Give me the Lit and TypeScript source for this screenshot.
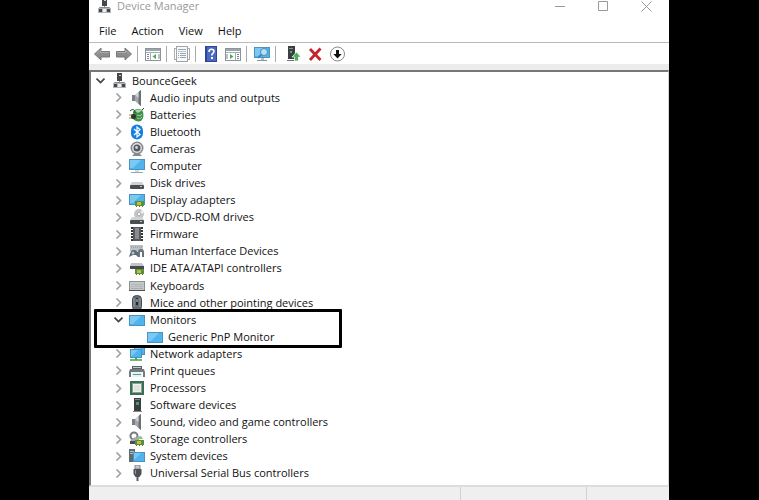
import { LitElement, html, svg, css, nothing } from "lit";
import { customElement, property } from "lit/decorators.js";
import { classMap } from "lit/directives/class-map.js";

const screen = (x: number, y: number, w: number, h: number) => svg`
  <rect x=${x} y=${y} width=${w} height=${h} fill="#4c93bb"/>
  <rect x=${x + 1} y=${y + 1} width=${w - 2} height=${h - 2} fill="#4fb4ee"/>
  <path d="M${x + 1} ${y + 1}h${w - 5}l-${h - 3} ${h - 3}h-${w - 2 - h}z" fill="#7ac8f5"/>`;

const chip = svg`
  <rect x="6" y="9" width="9" height="5" fill="#4d9445"/>
  <rect x="8" y="10" width="4" height="3" fill="#d8b430"/>
  <path d="M7 14.5h1M10 14.5h1M13 14.5h1" stroke="#8a6a10" stroke-width="1"/>`;

const drive = (y: number) => svg`
  <path d="M3 ${y}h10l2 3H1z" fill="#cfd1d3"/>
  <rect x="1" y=${y + 3} width="14" height="4" rx="1" fill="#4b4d50"/>
  <rect x="11" y=${y + 4} width="2" height="1" fill="#9fe0a6"/>`;

const speaker = svg`
  <path d="M3 5h3v6H3z" fill="#7b8086"/>
  <path d="M6 5l6-5v16l-6-5z" fill="#a4a9ae"/>
  <path d="M9.500 2l2.500-2v16l-2.500-2z" fill="#6b7075"/>
  <path d="M6 5l3.500-3v6z" fill="#d3d6d9"/>`;

const icons: Record<string, unknown> = {
  root: svg`
    <rect x="6" y="0" width="5" height="8" fill="#44484d"/><rect x="8" y="2" width="2" height="1" fill="#c8cdd2"/>
    <path d="M8.500 8v2M3.500 11V9.500h10V11" stroke="#888" fill="none"/>
    <rect x="2" y="10" width="13" height="5" fill="#b1b5b8"/>
    <rect x="3" y="11" width="3" height="3" fill="#44484c"/><rect x="11" y="11" width="3" height="3" fill="#44484c"/>
    <rect x="7" y="11" width="3" height="3" fill="#eceeef"/>`,
  audio: speaker,
  battery: svg`
    <path d="M4 5c1-3 6-4 9-2 2 3 2 8-1 11-3 1-6 0-8-2z" fill="#3f8f49"/>
    <path d="M6 4c2-2 5-2 7-.5L9 6z" fill="#a6d8a4"/>
    <path d="M8 8c2 1 4 1 5-1M8 11c2 1 3 1 5-1" stroke="#a2d79e" fill="none"/>
    <path d="M1 4c3-3 5-1 5 2M13 3l2-2" stroke="#2f4432" fill="none"/>
    <path d="M0 8h3M0 11h3" stroke="#a88a24"/><rect x="2" y="7" width="5" height="5" rx="2" fill="#2b3a2c"/>`,
  bluetooth: svg`
    <rect x="2" y="0.500" width="12" height="15" rx="6" fill="#1380e2"/>
    <path d="M5 5l6 5.500L8 13V3l3 2.500L5 11" stroke="#fff" stroke-width="1.200" fill="none"/>`,
  camera: svg`
    <circle cx="8" cy="7" r="6.500" fill="#85898d"/><circle cx="8" cy="7" r="4.900" fill="#dfe1e3"/>
    <circle cx="8" cy="7" r="3.500" fill="#54585d"/><circle cx="7.500" cy="6.500" r="1.400" fill="#d3dae0"/>
    <path d="M3 15l2-2h6l2 2z" fill="#85898d"/>`,
  computer: svg`${screen(0, 1, 16, 11)}<path d="M6 12h4v2H6z" fill="#d4dadf"/><path d="M2 14.500h12" stroke="#9aa3ab"/>`,
  disk: drive(7),
  display: svg`${screen(0, 2, 16, 11)}${chip}`,
  dvd: svg`<circle cx="10" cy="5" r="5" fill="#c3c5c7"/><path d="M10 5l3-4 2 3z" fill="#eee"/>
    <circle cx="10" cy="5" r="1.700" fill="#fff" stroke="#999" stroke-width=".7"/>${drive(8)}`,
  firmware: svg`
    <rect x="4" y="1" width="8" height="14" fill="#55585c"/><rect x="6" y="2" width="4" height="11" fill="#8a8c8f"/>
    <path d="M3 1v14M13 1v14" stroke="#333537" stroke-width="2" stroke-dasharray="2 1"/>`,
  hid: svg`
    <rect x="1" y="2" width="13" height="6" fill="#bcc1c5"/><path d="M2 4h11" stroke="#8b9196" stroke-dasharray="1 1"/>
    <path d="M0 14l2-6 2-1h2l3 2v5l-2-2H4z" fill="#5c6a74"/>
    <path d="M9 9a3 3 0 0 1 6 0v5h-2V9h-2v5H9z" fill="#68747d"/>
    <path d="M2.500 10h3M4 8.500v3" stroke="#d9dde0"/>`,
  ide: svg`<path d="M2 3h11l2 3H1z" fill="#c3c5c7"/><rect x="1" y="6" width="14" height="3" fill="#484b4f"/>${chip}`,
  keyboard: svg`
    <rect x="0.500" y="3.500" width="15" height="9" fill="#c6c9cc" stroke="#8d9195"/>
    <path d="M2 6.500h12M2 8.500h12" stroke="#b3b6b9"/><path d="M2 10.500h12" stroke="#a9acb0"/>
    <path d="M0 12.500h16" stroke="#4d5155"/>`,
  mouse: svg`
    <rect x="3.500" y="0.500" width="9" height="15" rx="4" fill="#666e76" stroke="#454b51"/>
    <path d="M5 3v9M11 3v9" stroke="#98a0a8"/><rect x="7" y="3" width="2" height="7" fill="#24282c"/><path d="M8 4v3" stroke="#d5dade"/>`,
  monitor: screen(0, 3, 16, 11),
  network: svg`${screen(5, 1, 11, 8)}${screen(1, 3, 12, 9)}
    <path d="M1 14h12" stroke="#6fb77a" stroke-width="2"/><path d="M7 12v2" stroke="#49a757" stroke-width="2"/>`,
  printer: svg`
    <path d="M3 3h10v3H3z" fill="#5b5f63"/><path d="M1 6h14l1 3v5h-2V9H2v5H0V9z" fill="#74797d"/>
    <rect x="3" y="9" width="10" height="5" fill="#e9f3f3"/><path d="M4 11.500h8" stroke="#48a0a0"/>
    <path d="M4 4.500h8" stroke="#bcd"/>`,
  cpu: svg`
    <rect x="1" y="1" width="14" height="14" fill="#3a6f51"/><rect x="3" y="3" width="10" height="10" fill="#7fa68f"/>
    <rect x="4" y="4" width="8" height="8" fill="#f0f1ef"/><rect x="5" y="5" width="6" height="6" fill="#e0e2df"/>`,
  software: svg`
    <rect x="5" y="1" width="7" height="13" fill="#3a3e41"/><rect x="6" y="2" width="5" height="1" fill="#7d8488"/>
    <rect x="7" y="5" width="3" height="3" fill="#4a9e62"/><path d="M4 14.500h9" stroke="#888"/>`,
  storage: svg`
    <circle cx="5" cy="5" r="3.500" fill="none" stroke="#777b80" stroke-width="2"/><path d="M1 10l5-4 4 2v4H1z" fill="#a5a9ac"/>
    <path d="M1 10h6v3H1z" fill="#4a4e52"/><path d="M8 6l4-1 2 3H8z" fill="#8fbf8c"/>${chip}`,
  system: svg`
    <rect x="0" y="1" width="6" height="13" fill="#5f6c76"/><path d="M1 3.500h4M1 5.500h4" stroke="#b4c1ca"/>${screen(4, 4, 12, 10)}`,
  usb: svg`
    <rect x="6" y="0" width="5" height="4" fill="#c5c8cb" stroke="#73777b" stroke-width=".8"/>
    <path d="M4.500 4h8v5l-2 3h-4l-2-3z" fill="#4d5155"/><path d="M8.500 12v4" stroke="#5b5f63" stroke-width="2"/>
    <path d="M6.500 5v4" stroke="#92979b"/>`,
  back: svg`<path d="M0.500 8L7 2v3.500h8.500v5.500H7v3z" fill="#8d8d8d" stroke="#777"/><path d="M2.500 8l4-3.500v2H15" stroke="#ababab" fill="none"/>`,
  forward: svg`<path d="M15.500 8L9 2v3.500H.5V11H9v3z" fill="#8d8d8d" stroke="#777"/><path d="M1 6.500h8.500v-2l4 3.500" stroke="#ababab" fill="none"/>`,
  tree: svg`
    <rect x="0.500" y="2.500" width="15" height="12" fill="#fff" stroke="#8c949b"/><path d="M1 4h14" stroke="#9aa5ae" stroke-width="2"/>
    <path d="M1 6.500h14M5.500 6v8" stroke="#a4adb4"/><path d="M11 8v5l-3.500-2.500z" fill="#4faa4f"/>
    <path d="M14 8v5M2 8.500h2M2 10.500h2M2 12.500h2" stroke="#7c868e"/>`,
  properties: svg`
    <rect x="0.500" y="2.500" width="15" height="11" fill="#fff" stroke="#a9adb1"/><rect x="2.500" y="0.500" width="11" height="15" fill="#f7f8f9" stroke="#a0a5aa"/>
    <path d="M4 3.500h8M4 7.500h1M6 7.500h6M4 9.500h1M6 9.500h6M4 11.500h1M6 11.500h6" stroke="#98a4b0"/><path d="M4 5.500h8" stroke="#b9c4cf"/>`,
  help: svg`
    <rect x="2" y="0" width="12" height="16" fill="#2c4796"/><rect x="4" y="1" width="9" height="14" fill="#4a69c0"/>
    <path d="M6 6c0-3.500 5-3.500 5-.7 0 2-2.300 2-2.300 4.200" stroke="#fff" stroke-width="1.600" fill="none"/><rect x="8" y="11" width="2" height="2" fill="#fff"/>`,
  action: svg`
    <rect x="0.500" y="2.500" width="15" height="12" fill="#fff" stroke="#8c949b"/><path d="M1 4h14" stroke="#9aa5ae" stroke-width="2"/>
    <path d="M1 6.500h14M10.500 6v8" stroke="#a4adb4"/><path d="M5 8v5l3.500-2.500z" fill="#4faa4f"/>
    <path d="M12 8.500h2M12 10.500h2M12 12.500h2M2 8v5" stroke="#7c868e"/>`,
  scan: svg`${screen(0, 1, 16, 11)}<circle cx="10" cy="6" r="3.500" fill="#b6e2f8" stroke="#4d8cb0"/>
    <path d="M7.500 8.500L4 12" stroke="#3d7fa6" stroke-width="1.500"/><path d="M7 12h3v2H7z" fill="#b7bfc5"/><path d="M3 14.500h10" stroke="#8a949c"/>`,
  update: svg`
    <rect x="3" y="0" width="7" height="13" fill="#3b3f42"/><path d="M4 2.500h4" stroke="#8b9196"/><rect x="5" y="5" width="2" height="2" fill="#42b75c"/>
    <path d="M2 14.500h8" stroke="#73777b"/><path d="M11.500 6l4.500 5h-2.500v4h-4v-4H7z" fill="#4fae57" stroke="#fff" stroke-width=".7"/>`,
  remove: svg`<path d="M3 3l10.500 11M13.500 2.500L3 14" stroke="#c4262b" stroke-width="2.800"/>`,
  disable: svg`
    <circle cx="8.500" cy="8" r="7" fill="#fff" stroke="#888"/><path d="M8.500 4v5" stroke="#111" stroke-width="3"/><path d="M4.300 8h8.400l-4.200 4.500z" fill="#111"/>`,
};

@customElement("dm-icon")
export class DmIcon extends LitElement {
  static styles = css`
    :host { display: block; flex: none; width: 16px; height: 16px; }
    .art { display: block; width: 100%; height: 100%; }
  `;
  @property() name = "root";
  render() {
    return html`<svg class="art" viewBox="0 0 16 16" aria-hidden="true">${icons[this.name]}</svg>`;
  }
}

interface Device { label: string; icon: string; children?: Device[]; }

const devices: Device[] = [
  { label: "Audio inputs and outputs", icon: "audio" },
  { label: "Batteries", icon: "battery" },
  { label: "Bluetooth", icon: "bluetooth" },
  { label: "Cameras", icon: "camera" },
  { label: "Computer", icon: "computer" },
  { label: "Disk drives", icon: "disk" },
  { label: "Display adapters", icon: "display" },
  { label: "DVD/CD-ROM drives", icon: "dvd" },
  { label: "Firmware", icon: "firmware" },
  { label: "Human Interface Devices", icon: "hid" },
  { label: "IDE ATA/ATAPI controllers", icon: "ide" },
  { label: "Keyboards", icon: "keyboard" },
  { label: "Mice and other pointing devices", icon: "mouse" },
  { label: "Monitors", icon: "monitor", children: [{ label: "Generic PnP Monitor", icon: "monitor" }] },
  { label: "Network adapters", icon: "network" },
  { label: "Print queues", icon: "printer" },
  { label: "Processors", icon: "cpu" },
  { label: "Software devices", icon: "software" },
  { label: "Sound, video and game controllers", icon: "audio" },
  { label: "Storage controllers", icon: "storage" },
  { label: "System devices", icon: "system" },
  { label: "Universal Serial Bus controllers", icon: "usb" },
];

const tools: [string, string][][] = [
  [["back", "Back"], ["forward", "Forward"]],
  [["tree", "Show/hide console tree"]],
  [["properties", "Properties"]],
  [["help", "Help"], ["action", "Show/hide action pane"]],
  [["scan", "Scan for hardware changes"]],
  [["update", "Update driver"], ["remove", "Uninstall device"], ["disable", "Disable device"]],
];

@customElement("app-root")
export class AppRoot extends LitElement {
  static styles = css`
    :host {
      display: block; box-sizing: border-box; height: 100vh; padding: 0 90px 0 89px;
      background: #000; color: #111; overflow: hidden;
      font: 11px/16px "Open Sans", "Noto Sans", sans-serif;
    }
    button { padding: 0; border: 0; background: none; color: inherit; font: inherit; }
    .window { display: flex; flex-direction: column; height: 100%; background: #fff; }
    .title { display: flex; align-items: center; height: 12px; margin-bottom: 8px; padding: 0 1px 0 7px; color: #999; }
    .caption { flex: 1; padding-left: 5px; line-height: 12px; }
    .sys { display: grid; place-items: center; width: 43px; height: 12px; }
    .glyph { width: 11px; height: 11px; stroke: #999; fill: none; }
    .menu { display: flex; gap: 15px; height: 22px; padding-left: 10px; align-items: center; border-bottom: 1px solid #bbb; }
    .tools { display: flex; align-items: center; height: 22px; padding-left: 5px; }
    .set { display: flex; gap: 6px; padding-right: 5px; margin-right: 7px; border-right: 1px solid #aaa; }
    .set:last-child { border: 0; padding-left: 2px; }
    .tool { display: block; }
    .pane {
      flex: 1; min-height: 0; display: flex; margin-top: 5px; padding-bottom: 3px;
      border: 1px solid #d5d5d5; border-top: 2px solid #777; border-left: 2px solid #777;
      border-bottom-color: #ddd;
      box-shadow: 0 -6px #ececec;
    }
    .tree { flex: 1; display: grid; grid-auto-rows: 1fr; min-height: 0; }
    .group { position: relative; grid-row: span 2; display: grid; grid-auto-rows: 1fr; }
    .mark { position: absolute; inset: -2px auto -3px 3px; box-sizing: border-box; width: 248px; border: 3px solid #000; border-radius: 1px; pointer-events: none; }
    .row { display: flex; align-items: center; min-height: 0; }
    .level1 { padding-left: 18px; }
    .level2 { padding-left: 36px; }
    .toggle, .leaf { display: grid; place-items: center; flex: none; width: 19px; margin-right: 1px; }
    .chevron { width: 9px; height: 9px; fill: none; stroke: #a3a3a3; stroke-width: 1.7; }
    .open { stroke: #444; }
    .label { padding-left: 5px; white-space: nowrap; }
    .status { display: flex; height: 13px; background: #efefef; border-top: 1px solid #ddd; }
    .message { flex: 1; }
    .cell { width: 125px; border-left: 1px solid #d2d2d2; }
    .cell:last-child { width: 82px; }
  `;

  private row(d: Device, level: number, open?: boolean) {
    return html`<div class=${classMap({ row: true, [`level${level}`]: true })} role="treeitem"
        aria-level=${level + 1} aria-expanded=${open === undefined ? nothing : String(open)}>
      ${open === undefined
        ? html`<span class="leaf"></span>`
        : html`<button class="toggle" aria-label=${`${open ? "Collapse" : "Expand"} ${d.label}`}>
            <svg class=${classMap({ chevron: true, open })} viewBox="0 0 9 9">
              <path d=${open ? "M0.500 2.500l4 4 4-4" : "M2.500 0.500l4 4-4 4"} />
            </svg></button>`}
      <dm-icon name=${d.icon}></dm-icon><span class="label">${d.label}</span>
    </div>`;
  }

  render() {
    return html`<main class="window">
      <header class="title">
        <dm-icon name="root"></dm-icon><span class="caption">Device Manager</span>
        <button class="sys" aria-label="Minimize"><svg class="glyph" viewBox="0 0 11 11"><path d="M0 5.500h10"/></svg></button>
        <button class="sys" aria-label="Maximize"><svg class="glyph" viewBox="0 0 11 11"><path d="M.5.5h9v9h-9z"/></svg></button>
        <button class="sys" aria-label="Close"><svg class="glyph" viewBox="0 0 11 11"><path d="M.5.5l10 10M10.500.5l-10 10"/></svg></button>
      </header>
      <nav class="menu">${["File", "Action", "View", "Help"].map((m) => html`<button>${m}</button>`)}</nav>
      <div class="tools" role="toolbar">
        ${tools.map((set) => html`<div class="set">${set.map(([icon, label]) => html`
          <button class="tool" aria-label=${label}><dm-icon name=${icon}></dm-icon></button>`)}</div>`)}
      </div>
      <section class="pane">
        <div class="tree" role="tree">
          ${this.row({ label: "BounceGeek", icon: "root" }, 0, true)}
          ${devices.map((d) => d.children
            ? html`<div class="group">${this.row(d, 1, true)}${d.children.map((c) => this.row(c, 2))}<div class="mark"></div></div>`
            : this.row(d, 1, false))}
        </div>
      </section>
      <footer class="status"><span class="message"></span><span class="cell"></span><span class="cell"></span></footer>
    </main>`;
  }
}
